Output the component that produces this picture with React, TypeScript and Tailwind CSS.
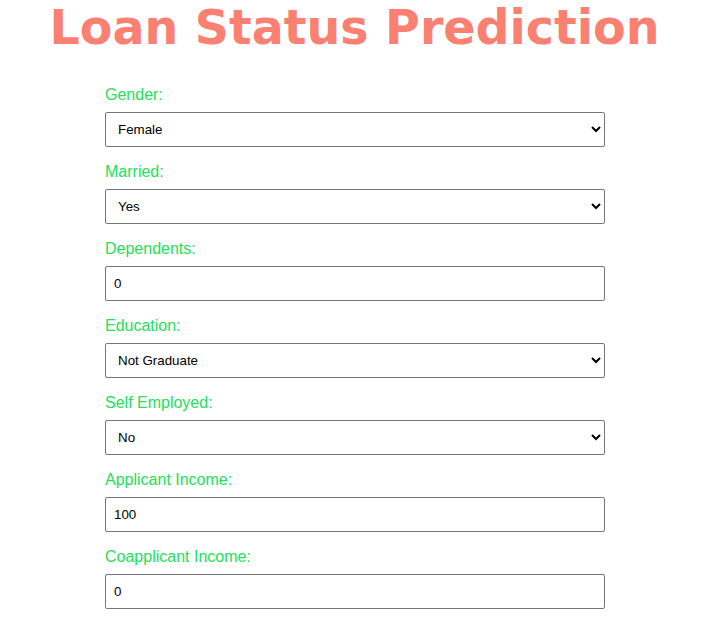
import React from "react";

const fields: { label: string; type: "select" | "input"; value: string; options?: string[] }[] = [
  { label: "Gender:", type: "select", value: "Female", options: ["Male", "Female"] },
  { label: "Married:", type: "select", value: "Yes", options: ["Yes", "No"] },
  { label: "Dependents:", type: "input", value: "0" },
  { label: "Education:", type: "select", value: "Not Graduate", options: ["Graduate", "Not Graduate"] },
  { label: "Self Employed:", type: "select", value: "No", options: ["Yes", "No"] },
  { label: "Applicant Income:", type: "input", value: "100" },
  { label: "Coapplicant Income:", type: "input", value: "0" },
];

export default function App() {
  return (
    <div className="min-h-[623px] bg-white" style={{ fontFamily: '"Liberation Sans", Arial, sans-serif' }}>
      <h1
        className="m-0 pl-[4px] text-center text-[47.5px] font-bold leading-[56px] text-[#fa8072]"
        style={{ fontFamily: '"DejaVu Sans", Verdana, sans-serif' }}
      >
        Loan Status Prediction
      </h1>
      <form className="ml-[105px] mt-[30px] w-[500px]">
        {fields.map((f) => (
          <div key={f.label} className="mb-[16px]">
            <label className="mb-[8px] block h-[18px] text-[16px] leading-[18px] text-[#22e05a]">{f.label}</label>
            {f.type === "select" ? (
              <select
                defaultValue={f.value}
                className="block h-[35px] w-full rounded-[2px] border border-[#767676] bg-white px-[8px] text-[13.33px] text-black"
              >
                {f.options!.map((o) => (
                  <option key={o} value={o}>
                    {o}
                  </option>
                ))}
              </select>
            ) : (
              <input
                type="text"
                defaultValue={f.value}
                className="block h-[35px] w-full rounded-[2px] border border-[#767676] bg-white px-[8px] text-[13.33px] text-black"
              />
            )}
          </div>
        ))}
      </form>
    </div>
  );
}
